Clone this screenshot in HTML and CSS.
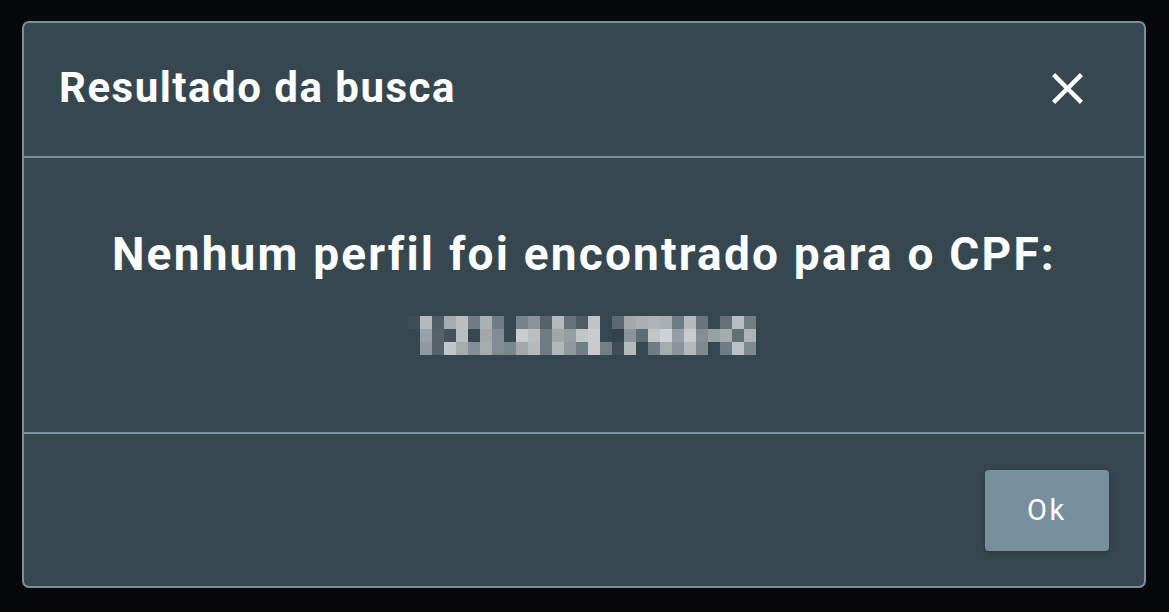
FILE: index.html
```html
<!DOCTYPE html>
<html lang="pt-BR">
<head>
<meta charset="utf-8">
<title>Resultado da busca</title>
<link rel="stylesheet" href="styles.css">
</head>
<body>
<div class="modal" role="dialog" aria-labelledby="modal-title">
  <header class="modal-header">
    <h2 class="modal-title" id="modal-title">Resultado da busca</h2>
    <button class="close-btn" aria-label="Fechar">
      <svg width="53" height="53" viewBox="0 0 24 24" aria-hidden="true"><path fill="#ffffff" d="M19 6.41L17.59 5 12 10.59 6.41 5 5 6.41 10.59 12 5 17.59 6.41 19 12 13.41 17.59 19 19 17.59 13.41 12z"/></svg>
    </button>
  </header>
  <section class="modal-body">
    <p class="message">Nenhum perfil foi encontrado para o CPF:</p>
    <svg class="cpf-blur" width="352" height="39" viewBox="0 0 352 39" aria-label="CPF ocultado">
      <g shape-rendering="crispEdges">
        <rect x="0" y="0" width="12" height="13" fill="#3f4d55"/>
        <rect x="12" y="0" width="12" height="13" fill="#b4babd"/>
        <rect x="24" y="0" width="12" height="13" fill="#505e66"/>
        <rect x="36" y="0" width="12" height="13" fill="#a5acb0"/>
        <rect x="48" y="0" width="12" height="13" fill="#b8bec1"/>
        <rect x="60" y="0" width="12" height="13" fill="#6f7c83"/>
        <rect x="72" y="0" width="12" height="13" fill="#aab1b4"/>
        <rect x="84" y="0" width="12" height="13" fill="#6f7c83"/>
        <rect x="108" y="0" width="12" height="13" fill="#76838a"/>
        <rect x="120" y="0" width="12" height="13" fill="#8a959b"/>
        <rect x="132" y="0" width="12" height="13" fill="#55626a"/>
        <rect x="144" y="0" width="12" height="13" fill="#b4babd"/>
        <rect x="156" y="0" width="12" height="13" fill="#66737a"/>
        <rect x="168" y="0" width="12" height="13" fill="#4f5d65"/>
        <rect x="180" y="0" width="12" height="13" fill="#c0c5c8"/>
        <rect x="204" y="0" width="12" height="13" fill="#5c6971"/>
        <rect x="216" y="0" width="12" height="13" fill="#a2a9ad"/>
        <rect x="228" y="0" width="12" height="13" fill="#a8aeb1"/>
        <rect x="240" y="0" width="12" height="13" fill="#adb3b6"/>
        <rect x="252" y="0" width="12" height="13" fill="#a9afb2"/>
        <rect x="264" y="0" width="12" height="13" fill="#707c83"/>
        <rect x="276" y="0" width="12" height="13" fill="#b4babd"/>
        <rect x="288" y="0" width="12" height="13" fill="#68757c"/>
        <rect x="312" y="0" width="12" height="13" fill="#647178"/>
        <rect x="324" y="0" width="12" height="13" fill="#b7bdc0"/>
        <rect x="336" y="0" width="12" height="13" fill="#727e85"/>
        <rect x="12" y="13" width="12" height="13" fill="#98a1a6"/>
        <rect x="24" y="13" width="12" height="13" fill="#55626a"/>
        <rect x="36" y="13" width="12" height="13" fill="#44535b"/>
        <rect x="48" y="13" width="12" height="13" fill="#b8bec1"/>
        <rect x="72" y="13" width="12" height="13" fill="#a0a8ac"/>
        <rect x="84" y="13" width="12" height="13" fill="#818c92"/>
        <rect x="108" y="13" width="12" height="13" fill="#c8cccf"/>
        <rect x="120" y="13" width="12" height="13" fill="#b8bec1"/>
        <rect x="132" y="13" width="12" height="13" fill="#707c83"/>
        <rect x="144" y="13" width="12" height="13" fill="#a0a8ac"/>
        <rect x="156" y="13" width="12" height="13" fill="#959ea3"/>
        <rect x="168" y="13" width="12" height="13" fill="#c0c5c8"/>
        <rect x="180" y="13" width="12" height="13" fill="#c8cccf"/>
        <rect x="204" y="13" width="12" height="13" fill="#34434b"/>
        <rect x="216" y="13" width="12" height="13" fill="#8a949a"/>
        <rect x="228" y="13" width="12" height="13" fill="#5f6c73"/>
        <rect x="240" y="13" width="12" height="13" fill="#c0c5c8"/>
        <rect x="252" y="13" width="12" height="13" fill="#ced2d4"/>
        <rect x="264" y="13" width="12" height="13" fill="#959ea3"/>
        <rect x="276" y="13" width="12" height="13" fill="#c8cccf"/>
        <rect x="288" y="13" width="12" height="13" fill="#848f95"/>
        <rect x="300" y="13" width="12" height="13" fill="#98a1a6"/>
        <rect x="312" y="13" width="12" height="13" fill="#a5acb0"/>
        <rect x="324" y="13" width="12" height="13" fill="#627078"/>
        <rect x="336" y="13" width="12" height="13" fill="#adb3b6"/>
        <rect x="12" y="26" width="12" height="13" fill="#8f999e"/>
        <rect x="24" y="26" width="12" height="13" fill="#55626a"/>
        <rect x="36" y="26" width="12" height="13" fill="#c0c6c9"/>
        <rect x="48" y="26" width="12" height="13" fill="#a5acb0"/>
        <rect x="60" y="26" width="12" height="13" fill="#848f95"/>
        <rect x="72" y="26" width="12" height="13" fill="#a5acb0"/>
        <rect x="84" y="26" width="12" height="13" fill="#818c92"/>
        <rect x="96" y="26" width="12" height="13" fill="#7a868b"/>
        <rect x="108" y="26" width="12" height="13" fill="#a0a8ac"/>
        <rect x="120" y="26" width="12" height="13" fill="#b4babd"/>
        <rect x="132" y="26" width="12" height="13" fill="#6f7c83"/>
        <rect x="144" y="26" width="12" height="13" fill="#b0b7ba"/>
        <rect x="156" y="26" width="12" height="13" fill="#8f999e"/>
        <rect x="168" y="26" width="12" height="13" fill="#727e85"/>
        <rect x="180" y="26" width="12" height="13" fill="#c8cccf"/>
        <rect x="192" y="26" width="12" height="13" fill="#737f86"/>
        <rect x="204" y="26" width="12" height="13" fill="#3f4d55"/>
        <rect x="216" y="26" width="12" height="13" fill="#b4babd"/>
        <rect x="240" y="26" width="12" height="13" fill="#6f7c83"/>
        <rect x="252" y="26" width="12" height="13" fill="#a5acb0"/>
        <rect x="264" y="26" width="12" height="13" fill="#8a949a"/>
        <rect x="276" y="26" width="12" height="13" fill="#b4babd"/>
        <rect x="288" y="26" width="12" height="13" fill="#7f8a90"/>
        <rect x="312" y="26" width="12" height="13" fill="#6f7c83"/>
        <rect x="324" y="26" width="12" height="13" fill="#bcc1c4"/>
        <rect x="336" y="26" width="12" height="13" fill="#7f8a90"/>
      </g>
    </svg>
  </section>
  <footer class="modal-footer">
    <button class="ok-btn">Ok</button>
  </footer>
</div>
</body>
</html>
```

FILE: styles.css
```css
html, body {
  margin: 0;
  padding: 0;
}

body {
  background: #06080b;
  font-family: Roboto, "Liberation Sans", Arial, sans-serif;
  color: #ffffff;
  padding: 21px 23px 24px 22px;
  box-sizing: border-box;
  height: 612px;
  overflow: hidden;
}

.modal {
  width: 1124px;
  height: 567px;
  box-sizing: border-box;
  background: #37474f;
  border: 2px solid #78909c;
  border-radius: 7px;
  display: flex;
  flex-direction: column;
}

.modal-header {
  height: 129px;
  border-bottom: 2px solid #78909c;
  display: flex;
  align-items: center;
  justify-content: space-between;
  padding: 0 50px 4px 35px;
}

.modal-title {
  margin: 0;
  font-size: 42px;
  font-weight: 700;
  line-height: 49px;
  letter-spacing: 1.5px;
  color: #ffffff;
}

.close-btn {
  background: none;
  border: 0;
  padding: 0;
  margin-top: 2px;
  width: 53px;
  height: 53px;
  display: flex;
  align-items: center;
  justify-content: center;
  cursor: pointer;
}

.modal-body {
  height: 205px;
  border-bottom: 2px solid #78909c;
  padding-top: 69px;
  display: flex;
  flex-direction: column;
  align-items: center;
  gap: 35px;
}

.message {
  margin: 0;
  font-size: 46px;
  font-weight: 700;
  line-height: 54px;
  letter-spacing: 2.2px;
  color: #ffffff;
}

.cpf-blur {
  display: block;
}

.modal-footer {
  flex: 1;
  display: flex;
  align-items: center;
  justify-content: flex-end;
  padding-right: 35px;
}

.ok-btn {
  width: 124px;
  height: 81px;
  background: #78909c;
  color: #ffffff;
  border: 0;
  border-radius: 4px;
  font-family: Roboto, "Liberation Sans", Arial, sans-serif;
  font-size: 29px;
  font-weight: 400;
  letter-spacing: 2.6px;
  box-shadow: 0 3px 6px rgba(0, 0, 0, 0.2);
  cursor: pointer;
}
```
